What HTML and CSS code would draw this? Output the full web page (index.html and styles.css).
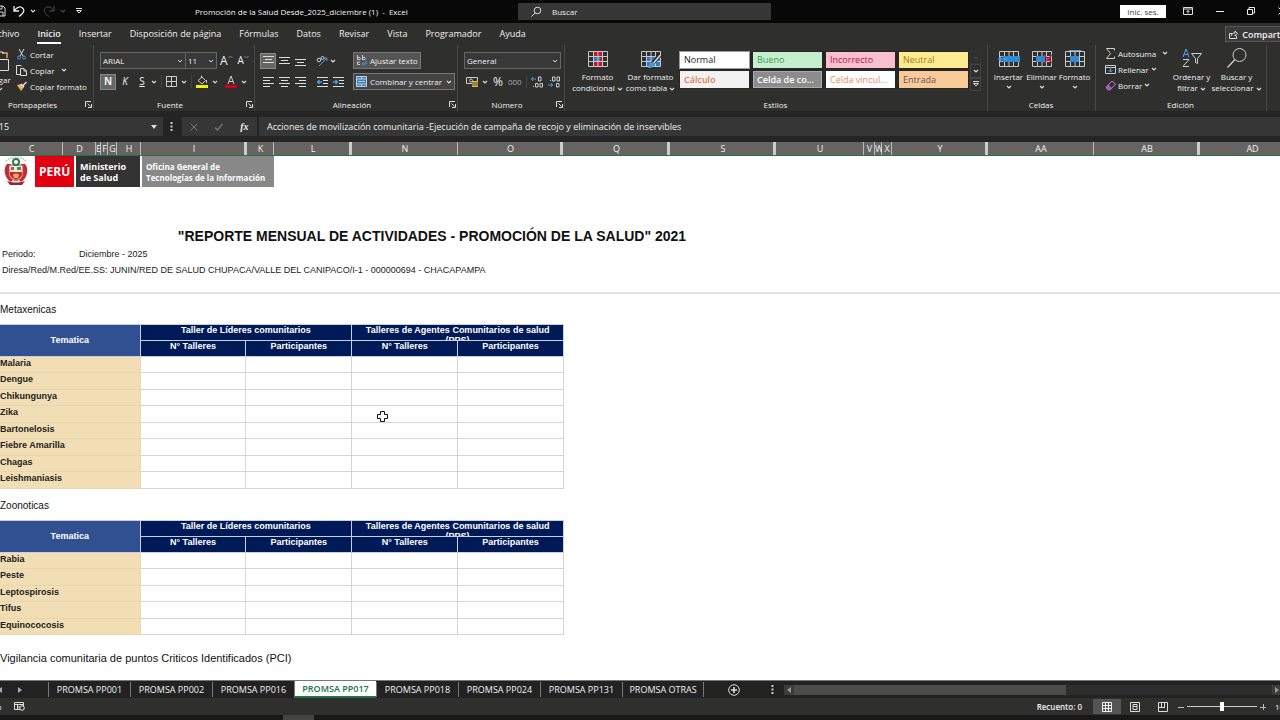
FILE: index.html
```html
<!DOCTYPE html>
<html lang="es">
<head>
    <meta charset="UTF-8">
    <meta name="viewport" content="width=device-width, initial-scale=1.0">
    <title>Promoción de la Salud Desde_2025_diciembre (1) - Excel</title>
    <link rel="stylesheet" href="styles.css">
</head>
<body>
    <!-- Shared icons -->
    <svg class="defs" width="0" height="0">
        <symbol id="caret" viewBox="0 0 6 4"><path d="M1 1l2 2 2-2" fill="none" stroke="#ddd" stroke-width="1.1"/></symbol>
        <symbol id="launcher" viewBox="0 0 7 7"><path d="M.5 6V.5H6M2.5 2.5l3 3M6.5 3v3.5H3" fill="none" stroke="#ddd"/></symbol>
        <symbol id="grid" viewBox="0 0 20 18"><path d="M.5 1.5h19v15H.5zM.5 6.5h19M.5 11.500h19M5.500 1.500v15M10 1.500v15M14.500 1.500v15" fill="none" stroke="#c8c8c8"/></symbol>
    </svg>

    <div class="window">
        <!-- Title bar -->
        <header class="titlebar">
            <div class="quick">
                <button aria-label="Guardar"><svg width="12" height="12" viewBox="0 0 12 12"><path d="M1 1h8l2 2v8H1zM3 1v3h5V1M3 11V7h6v4" fill="none" stroke="#ddd"/></svg></button>
                <button aria-label="Deshacer"><svg width="12" height="12" viewBox="0 0 12 12"><path d="M1 1v5h5M1.500 5.500C4 1.500 8 1 10 3.500s0 5-4 8" fill="none" stroke="#eee" stroke-width="1.300"/></svg></button>
                <svg width="6" height="4"><use href="#caret"/></svg>
                <button class="dim" aria-label="Rehacer"><svg width="12" height="12" viewBox="0 0 12 12"><path d="M11 1v5H6M10.500 5.500C8 1.500 4 1 2 3.500s0 5 4 8" fill="none" stroke="#eee"/></svg></button>
                <svg class="dim" width="6" height="4"><use href="#caret"/></svg>
                <button class="customize" aria-label="Personalizar"><svg width="6" height="6" viewBox="0 0 6 6"><path d="M0 .5h6" stroke="#ddd"/><path d="M.5 2.500h5L3 5z" fill="none" stroke="#ddd"/></svg></button>
            </div>
            <h1>Promoción de la Salud Desde_2025_diciembre (1)&nbsp; -&nbsp; Excel</h1>
            <label class="search">
                <svg width="11" height="11" viewBox="0 0 11 11"><circle cx="6.500" cy="4.500" r="3.300" fill="none" stroke="#ddd"/><path d="M4 7l-3.500 3.500" stroke="#ddd"/></svg>
                <input type="text" placeholder="Buscar" aria-label="Buscar">
            </label>
            <div class="controls">
                <button class="signin">Inic. ses.</button>
                <button aria-label="Opciones de la cinta"><svg width="10" height="8" viewBox="0 0 10 8"><path d="M.5.5h9v7h-9zM.5 2h9M5 6.500V3.500M3.500 5L5 3.500 6.500 5" fill="none" stroke="#ddd"/></svg></button>
                <button aria-label="Minimizar"><svg width="8" height="8" viewBox="0 0 8 8"><path d="M0 4.500h8" stroke="#eee"/></svg></button>
                <button aria-label="Restaurar"><svg width="8" height="8" viewBox="0 0 8 8"><path d="M.5 2.500h5v5h-5zM2 2V.5h5.500V6H6" fill="none" stroke="#eee"/></svg></button>
                <button aria-label="Cerrar"><svg width="8" height="8" viewBox="0 0 8 8"><path d="M.5.5l7 7M7.500.5l-7 7" stroke="#eee"/></svg></button>
            </div>
        </header>

        <nav class="menu">
            <a href="#">Archivo</a>
            <a href="#" class="active">Inicio</a>
            <a href="#">Insertar</a>
            <a href="#">Disposición de página</a>
            <a href="#">Fórmulas</a>
            <a href="#">Datos</a>
            <a href="#">Revisar</a>
            <a href="#">Vista</a>
            <a href="#">Programador</a>
            <a href="#">Ayuda</a>
            <button class="share"><svg width="9" height="9" viewBox="0 0 9 9"><path d="M3 3.500H.5v5h7V6M2.500 6c0-2 1-3 3.500-3V1l2.500 2.500L6 6V4.500" fill="none" stroke="#ddd"/></svg>Compartir</button>
        </nav>

        <!-- Ribbon -->
        <div class="ribbon">
            <section class="group clipboard">
                <div class="tools">
                    <button class="big paste"><svg width="20" height="22" viewBox="0 0 20 22"><path d="M8 3H2v16h6M12 3h5v5" fill="none" stroke="#e0a550" stroke-width="1.500"/><path d="M7 4V2h6v2M9.500 9.500h9v11h-9z" fill="none" stroke="#ddd"/></svg>Pegar<svg width="6" height="4"><use href="#caret"/></svg></button>
                    <div class="list">
                        <button><svg width="11" height="11" viewBox="0 0 11 11"><path d="M3 0l4 7M8 0L4 7" stroke="#ddd"/><circle cx="3" cy="8.500" r="1.500" fill="none" stroke="#4a9bdc"/><circle cx="8" cy="8.500" r="1.500" fill="none" stroke="#4a9bdc"/></svg>Cortar</button>
                        <button><svg width="11" height="11" viewBox="0 0 11 11"><path d="M4 9.500H.5v-9H5l1 1M4.500 3.500h3.500l2.500 2.500v4.500h-6zM8 3.500V6h2.500" fill="none" stroke="#ddd"/></svg>Copiar<svg class="gap" width="6" height="4"><use href="#caret"/></svg></button>
                        <button><svg width="11" height="11" viewBox="0 0 11 11"><path d="M1 4l4-1 3 3-3 4z" fill="#e8b060"/><path d="M5 3l3 3M7 4.500L10.500 1" stroke="#ddd" stroke-width="1.500"/></svg>Copiar formato</button>
                    </div>
                </div>
                <footer><span>Portapapeles</span><svg width="7" height="7"><use href="#launcher"/></svg></footer>
            </section>

            <section class="group font">
                <div class="tools rows">
                    <div class="row">
                        <div class="combos">
                            <select class="combo family" aria-label="Fuente"><option>ARIAL</option></select>
                            <select class="combo size" aria-label="Tamaño"><option>11</option></select>
                        </div>
                        <button class="grow" aria-label="Aumentar">A<svg width="5" height="4" viewBox="0 0 5 4"><path d="M.5 3l2-2 2 2" fill="none" stroke="#4a9bdc"/></svg></button>
                        <button class="shrink" aria-label="Disminuir">A<svg width="5" height="4" viewBox="0 0 5 4"><path d="M.5 1l2 2 2-2" fill="none" stroke="#4a9bdc"/></svg></button>
                    </div>
                    <div class="row">
                        <button class="toggle on"><b>N</b></button>
                        <button class="toggle"><i>K</i></button>
                        <button class="toggle"><u>S</u></button>
                        <svg width="6" height="4"><use href="#caret"/></svg>
                        <span class="sep"></span>
                        <button aria-label="Bordes"><svg width="11" height="11" viewBox="0 0 11 11"><path d="M.5.5h10v10H.5zM5.500.5v10M.5 5.500h10" fill="none" stroke="#ccc"/></svg></button>
                        <svg width="6" height="4"><use href="#caret"/></svg>
                        <span class="sep"></span>
                        <button aria-label="Relleno"><svg width="12" height="13" viewBox="0 0 12 13"><path d="M2 5.500L6 2l3.500 3.500L6 9zM5.500 3V.5M10.500 5v3" fill="none" stroke="#ccc"/><path d="M0 10h12v3H0z" fill="#f2f200"/></svg></button>
                        <svg width="6" height="4"><use href="#caret"/></svg>
                        <button aria-label="Color de fuente"><svg width="12" height="13" viewBox="0 0 12 13"><path d="M3 9l3-8 3 8M4 6.500h4" fill="none" stroke="#ccc"/><path d="M0 10h12v3H0z" fill="#d00018"/></svg></button>
                        <svg width="6" height="4"><use href="#caret"/></svg>
                    </div>
                </div>
                <footer><span>Fuente</span><svg width="7" height="7"><use href="#launcher"/></svg></footer>
            </section>

            <section class="group align">
                <div class="tools columns">
                    <div class="rows">
                        <div class="row">
                            <button class="toggle on" aria-label="Arriba"><svg width="11" height="10" viewBox="0 0 11 10"><path d="M0 .5h11M2 3.500h7M0 6.500h11" stroke="#ddd"/></svg></button>
                            <button class="toggle" aria-label="Medio"><svg width="11" height="10" viewBox="0 0 11 10"><path d="M0 1.500h11M2 4.500h7M0 7.500h11" stroke="#ddd"/></svg></button>
                            <button class="toggle" aria-label="Abajo"><svg width="11" height="10" viewBox="0 0 11 10"><path d="M0 3.500h11M2 6.500h7M0 9.500h11" stroke="#ddd"/></svg></button>
                            <button class="toggle orient" aria-label="Orientación"><svg width="12" height="11" viewBox="0 0 12 11"><path d="M3 11l8-8M8 3h3v3" fill="none" stroke="#4a9bdc"/><circle cx="3" cy="5" r="1.800" fill="none" stroke="#ccc"/><circle cx="6.500" cy="3" r="1.500" fill="none" stroke="#ccc"/></svg></button>
                            <svg width="6" height="4"><use href="#caret"/></svg>
                        </div>
                        <div class="row">
                            <button class="toggle" aria-label="Izquierda"><svg width="11" height="10" viewBox="0 0 11 10"><path d="M0 .5h11M0 3.500h7M0 6.500h11M0 9.500h7" stroke="#ddd"/></svg></button>
                            <button class="toggle" aria-label="Centro"><svg width="11" height="10" viewBox="0 0 11 10"><path d="M0 .5h11M2 3.500h7M0 6.500h11M2 9.500h7" stroke="#ddd"/></svg></button>
                            <button class="toggle" aria-label="Derecha"><svg width="11" height="10" viewBox="0 0 11 10"><path d="M0 .5h11M4 3.500h7M0 6.500h11M4 9.500h7" stroke="#ddd"/></svg></button>
                            <button class="toggle orient" aria-label="Menos sangría"><svg width="11" height="10" viewBox="0 0 11 10"><path d="M0 .5h11M6 3.500h5M6 6.500h5M0 9.500h11" stroke="#ddd"/><path d="M5 5H.5M2.500 3L.5 5l2 2" fill="none" stroke="#4a9bdc" stroke-width="1.500"/></svg></button>
                            <button class="toggle" aria-label="Más sangría"><svg width="11" height="10" viewBox="0 0 11 10"><path d="M0 .5h11M6 3.500h5M6 6.500h5M0 9.500h11" stroke="#ddd"/><path d="M0 5h4.500M2.500 3l2 2-2 2" fill="none" stroke="#4a9bdc" stroke-width="1.500"/></svg></button>
                        </div>
                    </div>
                    <div class="rows">
                        <div class="row"><button class="wide"><svg width="11" height="11" viewBox="0 0 11 11"><path d="M1.500 0v5M1.500 3.500c0-1.500 3-1.500 3 0s-3 1.500-3 0M6.500 0v5M6.500 3.500c0-1.500 3-1.500 3 0s-3 1.500-3 0M4 7H1.500v2.500H4" fill="none" stroke="#ccc"/><path d="M10 6v3H6M7.500 7.500L6 9l1.500 1.500" fill="none" stroke="#4a9bdc"/></svg>Ajustar texto</button></div>
                        <div class="row"><button class="wide merge"><svg width="11" height="11" viewBox="0 0 11 11"><path d="M0 0h11v11H0z" fill="#3c7fb8"/><path d="M.5.5h10v10H.5zM.5 3h10M.5 8h10M5.500 0v3M5.500 8v3M2 5.500h7" fill="none" stroke="#bcd0e0"/></svg>Combinar y centrar<svg class="end" width="6" height="4"><use href="#caret"/></svg></button></div>
                    </div>
                </div>
                <footer><span>Alineación</span><svg width="7" height="7"><use href="#launcher"/></svg></footer>
            </section>

            <section class="group number">
                <div class="tools rows">
                    <div class="row"><select class="combo format" aria-label="Formato de número"><option>General</option></select></div>
                    <div class="row">
                        <button aria-label="Moneda"><svg width="13" height="11" viewBox="0 0 13 11"><path d="M.5 1.500h11v6H.5z" fill="none" stroke="#ccc"/><circle cx="5" cy="4.500" r="1.500" fill="none" stroke="#ccc"/><path d="M6 5h6v6H6z" fill="#e0bc50"/><path d="M6 7h6M6 9h6" stroke="#5a4a20"/></svg></button>
                        <svg width="6" height="4"><use href="#caret"/></svg>
                        <button class="percent">%</button>
                        <button class="thousands">000</button>
                        <span class="sep"></span>
                        <button class="decimals" aria-label="Aumentar decimales"><svg width="12" height="12" viewBox="0 0 12 12"><path d="M5 3H.5M2 1L.5 3 2 5" fill="none" stroke="#4a9bdc"/><path d="M7.500 1h2.500v4H7.500zM4.500 7.500H7v3.500H4.500zM9 7.500h2.500v3.500H9zM2 10.500h1" fill="none" stroke="#ccc"/></svg></button>
                        <button class="decimals" aria-label="Disminuir decimales"><svg width="12" height="12" viewBox="0 0 12 12"><path d="M0 9h4.500M3 7l1.500 2L3 11" fill="none" stroke="#4a9bdc"/><path d="M4.500 1H7v4H4.500zM9 1h2.500v4H9zM8.500 7.500H11v3.500H8.500zM2 4.500h1" fill="none" stroke="#ccc"/></svg></button>
                    </div>
                </div>
                <footer><span>Número</span><svg width="7" height="7"><use href="#launcher"/></svg></footer>
            </section>

            <section class="group styles">
                <div class="tools">
                    <button class="big"><svg width="20" height="18" viewBox="0 0 20 18"><path d="M5 1h9v16H5z" fill="#c5162c"/><path d="M5 7h7v4H5z" fill="#2f7cc4"/><use href="#grid"/></svg><span>Formato<br>condicional <svg width="6" height="4"><use href="#caret"/></svg></span></button>
                    <button class="big"><svg width="20" height="18" viewBox="0 0 20 18"><path d="M5 6h14v10H5z" fill="#2f7cc4"/><use href="#grid" width="20" height="18"/><path d="M19 5l-8 9" stroke="#2b2b2b" stroke-width="4"/><path d="M19.500 5l-7 8" stroke="#ddd" stroke-width="1.500"/><path d="M12 12c-3 0-3 3-5 6 4 0 7-1 7-4z" fill="#4a9bdc"/></svg><span>Dar formato<br>como tabla <svg width="6" height="4"><use href="#caret"/></svg></span></button>
                    <div class="gallery">
                        <button class="normal">Normal</button>
                        <button class="good">Bueno</button>
                        <button class="bad">Incorrecto</button>
                        <button class="neutral">Neutral</button>
                        <button class="calc">Cálculo</button>
                        <button class="check">Celda de co...</button>
                        <button class="linked">Celda vincul...</button>
                        <button class="input">Entrada</button>
                    </div>
                    <div class="scroller">
                        <button class="dim" aria-label="Subir"><svg width="6" height="4" viewBox="0 0 6 4"><path d="M1 3l2-2 2 2" fill="none" stroke="#aaa"/></svg></button>
                        <button aria-label="Bajar"><svg width="6" height="4"><use href="#caret"/></svg></button>
                        <button aria-label="Más"><svg width="6" height="6" viewBox="0 0 6 6"><path d="M0 .5h6" stroke="#ddd"/><path d="M.5 2.500h5L3 5z" fill="none" stroke="#ddd"/></svg></button>
                    </div>
                </div>
                <footer><span>Estilos</span></footer>
            </section>

            <section class="group cells">
                <div class="tools">
                    <button class="big"><svg width="22" height="18" viewBox="0 0 22 18"><use href="#grid" x="1" width="20" height="18"/><path d="M5 6h17v6H5z" fill="#2f8ad8"/><path d="M9 9H1M4 6L1 9l3 3" fill="none" stroke="#4aa3ea" stroke-width="1.500"/></svg><span>Insertar</span><svg width="6" height="4"><use href="#caret"/></svg></button>
                    <button class="big"><svg width="22" height="18" viewBox="0 0 22 18"><use href="#grid" x="1" width="20" height="18"/><path d="M5 6h9v6H5z" fill="#2f8ad8"/><path d="M13 5l8 8M21 5l-8 8" stroke="#c8284a" stroke-width="1.500"/></svg><span>Eliminar</span><svg width="6" height="4"><use href="#caret"/></svg></button>
                    <button class="big"><svg width="22" height="18" viewBox="0 0 22 18"><use href="#grid" x="1" width="20" height="18"/><path d="M6 6h9v6H6z" fill="#2f8ad8"/><path d="M5 .5h12" stroke="#4aa3ea"/></svg><span>Formato</span><svg width="6" height="4"><use href="#caret"/></svg></button>
                </div>
                <footer><span>Celdas</span></footer>
            </section>

            <section class="group edit">
                <div class="tools">
                    <div class="list">
                        <button><svg width="11" height="11" viewBox="0 0 11 11"><path d="M9.500 2.500V.5h-8l4 5-4 5h8v-2" fill="none" stroke="#ccc"/></svg>Autosuma<svg class="gap" width="6" height="4"><use href="#caret"/></svg></button>
                        <button><svg width="11" height="11" viewBox="0 0 11 11"><path d="M.5 1.500h10v8H.5zM.5 3.500h10" fill="none" stroke="#ccc"/><path d="M5.500 3v5M3.500 6l2 2 2-2" fill="none" stroke="#4aa3ea"/></svg>Rellenar<svg width="6" height="4"><use href="#caret"/></svg></button>
                        <button><svg width="11" height="11" viewBox="0 0 11 11"><path d="M1 7l6-6 3.500 3L5 10H3z" fill="none" stroke="#c07ad0"/><path d="M1 7l2.500-2.500L7 8l-2 2H3z" fill="#a455b8"/></svg>Borrar<svg width="6" height="4"><use href="#caret"/></svg></button>
                    </div>
                    <button class="big"><svg width="20" height="20" viewBox="0 0 20 20"><path d="M1 9l3-8 3 8M2 6.500h4" fill="none" stroke="#4aa3ea"/><path d="M1 11.500h6l-6 7h6M9.500 5.500h10l-4 5v5l-2-1v-4z" fill="none" stroke="#ccc"/></svg><span>Ordenar y<br>filtrar <svg width="6" height="4"><use href="#caret"/></svg></span></button>
                    <button class="big"><svg width="20" height="20" viewBox="0 0 20 20"><circle cx="12.500" cy="7" r="6.500" fill="none" stroke="#ccc"/><path d="M8 11.500L.5 19.500" stroke="#ccc" stroke-width="1.300"/></svg><span>Buscar y<br>seleccionar <svg width="6" height="4"><use href="#caret"/></svg></span></button>
                </div>
                <footer><span>Edición</span></footer>
            </section>
        </div>

        <!-- Formula bar -->
        <div class="formula">
            <div class="namebox">
                <input type="text" value="N15" aria-label="Cuadro de nombres">
                <svg width="6" height="4" viewBox="0 0 6 4"><path d="M0 0h6L3 4z" fill="#ddd"/></svg>
            </div>
            <svg width="3" height="9" viewBox="0 0 3 9"><path d="M.5 0h2v2h-2zM.5 3.500h2v2h-2zM.5 7h2v2h-2z" fill="#ccc"/></svg>
            <div class="fx">
                <button aria-label="Cancelar"><svg width="8" height="8" viewBox="0 0 8 8"><path d="M.5.5l7 7M7.500.5l-7 7" stroke="#777"/></svg></button>
                <button aria-label="Introducir"><svg width="8" height="8" viewBox="0 0 8 8"><path d="M0 4.500L2.500 7l5-6" fill="none" stroke="#777" stroke-width="1.300"/></svg></button>
                <button class="fn">fx</button>
            </div>
            <input class="content" type="text" aria-label="Barra de fórmulas" value="Acciones de movilización comunitaria -Ejecución de campaña de recojo y eliminación de inservibles">
        </div>

        <!-- Worksheet -->
        <div class="colheads">
            <span>B</span><span>C</span><span>D</span><span>E</span><span>F</span><span>G</span><span>H</span><span class="thick">I</span><span>K</span><span class="thick">L</span><span>N</span><span class="thick">O</span><span class="thick">Q</span><span class="thick">S</span><span>U</span><span>V</span><span>W</span><span>X</span><span class="thick">Y</span><span>AA</span><span class="thick">AB</span><span>AD</span>
        </div>
        <main class="sheet">
            <div class="logo">
                <svg width="26" height="30" viewBox="0 0 26 30">
                    <path d="M3 5C8 0 18 0 23 5" fill="none" stroke="#bbb" stroke-width="1.500" stroke-dasharray="1.500 1"/>
                    <path d="M4 8c-4 4-3 14 4 18l3-3C7 20 6 14 8 8zM22 8c4 4 3 14-4 18l-3-3c4-3 5-9 3-15z" fill="#c62a35"/>
                    <path d="M6 9h14v9c0 4-4 6-7 7-3-1-7-3-7-7z" fill="#f3e4dc" stroke="#b8444a"/>
                    <path d="M7 16h12v3c-1 3-4 4-6 5-2-1-5-2-6-5z" fill="#cc2430"/>
                    <path d="M10 19c1-2 5-2 6 0l-1 3h-4z" fill="#e0b04a"/>
                    <path d="M8 11h3v3H8z" fill="#8d6b52"/>
                    <path d="M14 11h4v3h-4z" fill="#4b8a52"/>
                    <circle cx="13" cy="6" r="3" fill="none" stroke="#2f7a44" stroke-width="2"/>
                    <path d="M4 25c6 2 12 2 18 0l-3 4H7z" fill="#8f2a30"/>
                </svg>
                <strong class="peru">PERÚ</strong>
                <strong class="ministry">Ministerio<br>de Salud</strong>
                <strong class="office">Oficina General de<br>Tecnologías de la Información</strong>
            </div>
            <h2>"REPORTE MENSUAL DE ACTIVIDADES - PROMOCIÓN DE LA SALUD" 2021</h2>
            <p class="period"><span>Periodo:</span><span>Diciembre - 2025</span></p>
            <p>Diresa/Red/M.Red/EE.SS: JUNIN/RED DE SALUD CHUPACA/VALLE DEL CANIPACO/I-1 - 000000694 - CHACAPAMPA</p>
            <hr>
            <h3>Metaxenicas</h3>
            <table>
                <colgroup><col class="topic"><col><col><col><col></colgroup>
                <thead>
                    <tr><th rowspan="2" class="theme">Tematica</th><th colspan="2">Taller de Líderes comunitarios</th><th colspan="2"><div class="cut">Talleres de Agentes Comunitarios de salud (PPS)</div></th></tr>
                    <tr><th>N° Talleres</th><th>Participantes</th><th>N° Talleres</th><th>Participantes</th></tr>
                </thead>
                <tbody>
                    <tr><td>Malaria</td><td></td><td></td><td></td><td></td></tr>
                    <tr><td>Dengue</td><td></td><td></td><td></td><td></td></tr>
                    <tr><td>Chikungunya</td><td></td><td></td><td></td><td></td></tr>
                    <tr><td>Zika</td><td></td><td></td><td></td><td></td></tr>
                    <tr><td>Bartonelosis</td><td></td><td></td><td></td><td></td></tr>
                    <tr><td>Fiebre Amarilla</td><td></td><td></td><td></td><td></td></tr>
                    <tr><td>Chagas</td><td></td><td></td><td></td><td></td></tr>
                    <tr><td>Leishmaniasis</td><td></td><td></td><td></td><td></td></tr>
                </tbody>
            </table>
            <h3>Zoonoticas</h3>
            <table>
                <colgroup><col class="topic"><col><col><col><col></colgroup>
                <thead>
                    <tr><th rowspan="2" class="theme">Tematica</th><th colspan="2">Taller de Líderes comunitarios</th><th colspan="2"><div class="cut">Talleres de Agentes Comunitarios de salud (PPS)</div></th></tr>
                    <tr><th>N° Talleres</th><th>Participantes</th><th>N° Talleres</th><th>Participantes</th></tr>
                </thead>
                <tbody>
                    <tr><td>Rabia</td><td></td><td></td><td></td><td></td></tr>
                    <tr><td>Peste</td><td></td><td></td><td></td><td></td></tr>
                    <tr><td>Leptospirosis</td><td></td><td></td><td></td><td></td></tr>
                    <tr><td>Tifus</td><td></td><td></td><td></td><td></td></tr>
                    <tr><td>Equinococosis</td><td></td><td></td><td></td><td></td></tr>
                </tbody>
            </table>
            <h3 class="large">Vigilancia comunitaria de puntos Criticos Identificados (PCI)</h3>
            <svg class="cursor" width="11" height="11" viewBox="0 0 11 11"><path d="M3.500.5h4v3h3v4h-3v3h-4v-3h-3v-4h3z" fill="#fff" stroke="#111"/></svg>
        </main>

        <!-- Sheet tabs -->
        <div class="sheets">
            <div class="arrows">
                <button aria-label="Anterior"><svg width="4" height="6" viewBox="0 0 4 6"><path d="M4 0v6L0 3z" fill="#aaa"/></svg></button>
                <button aria-label="Siguiente"><svg width="4" height="6" viewBox="0 0 4 6"><path d="M0 0v6l4-3z" fill="#aaa"/></svg></button>
            </div>
            <nav class="tabs">
                <a href="#">PROMSA PP001</a><a href="#">PROMSA PP002</a><a href="#">PROMSA PP016</a><a href="#" class="active">PROMSA PP017</a><a href="#">PROMSA PP018</a><a href="#">PROMSA PP024</a><a href="#">PROMSA PP131</a><a href="#">PROMSA OTRAS</a>
            </nav>
            <button class="add" aria-label="Hoja nueva"><svg width="12" height="12" viewBox="0 0 12 12"><circle cx="6" cy="6" r="5.300" fill="none" stroke="#ddd"/><path d="M6 3v6M3 6h6" stroke="#ddd" stroke-width="1.600"/></svg></button>
            <svg width="3" height="9" viewBox="0 0 3 9"><path d="M.5 0h2v2h-2zM.5 3.500h2v2h-2zM.5 7h2v2h-2z" fill="#ccc"/></svg>
            <div class="scrollbar">
                <button aria-label="Izquierda"><svg width="4" height="6" viewBox="0 0 4 6"><path d="M4 0v6L0 3z" fill="#999"/></svg></button>
                <div class="track"><div class="thumb"></div></div>
                <button aria-label="Derecha"><svg width="4" height="6" viewBox="0 0 4 6"><path d="M0 0v6l4-3z" fill="#999"/></svg></button>
            </div>
        </div>

        <footer class="status">
            <span class="ready">Listo</span>
            <button aria-label="Grabar macro"><svg width="11" height="9" viewBox="0 0 11 9"><path d="M.5.5h9v7h-9zM0 2.500h10M3.500 2v6M3 5h3" fill="none" stroke="#ddd"/><circle cx="8" cy="6" r="2.300" fill="#333" stroke="#ddd"/></svg></button>
            <span class="count">Recuento: 0</span>
            <button class="view on" aria-label="Normal"><svg width="10" height="10" viewBox="0 0 10 10"><path d="M.5.5h9v9h-9zM3.500 0v10M6.500 0v10M0 3.500h10M0 6.500h10" fill="none" stroke="#eee"/></svg></button>
            <button class="view" aria-label="Diseño de página"><svg width="10" height="10" viewBox="0 0 10 10"><path d="M.5.5h9v9h-9zM3 2.500h4v5H3zM3 4.500h4" fill="none" stroke="#ddd"/></svg></button>
            <button class="view" aria-label="Saltos de página"><svg width="10" height="10" viewBox="0 0 10 10"><path d="M.5.5h9v9h-9zM3.500 0v5.500M6.500 0v5.500M0 5.500h7" fill="none" stroke="#ddd"/></svg></button>
            <div class="zoom">
                <button aria-label="Alejar"><svg width="6" height="6" viewBox="0 0 6 6"><path d="M0 3.500h6" stroke="#bbb"/></svg></button>
                <input type="range" min="0" max="100" value="50" aria-label="Zoom">
                <button aria-label="Acercar"><svg width="6" height="6" viewBox="0 0 6 6"><path d="M0 3.500h6M3.500 0v6" stroke="#bbb"/></svg></button>
                <span>100%</span>
            </div>
        </footer>
        <div class="taskbar"><span class="task"></span><time>20:47</time></div>
    </div>
</body>
</html>
```
FILE: styles.css
```css
* { box-sizing: border-box; }
body {
    margin: 0;
    overflow: hidden;
    background: #0a0a0a;
    color: #f0f0f0;
    font: 8px/11px "Open Sans", "Noto Sans", sans-serif;
}
button, input, select { margin: 0; padding: 0; border: 0; background: none; color: inherit; font: inherit; }
input { min-width: 0; }
a { color: inherit; text-decoration: none; }
h1, h2, h3, p { margin: 0; }
svg { flex: none; }
button { display: flex; align-items: center; justify-content: center; white-space: nowrap; flex: none; }
.defs { position: absolute; }
.dim { opacity: 0.3; }

/* the window runs 20px past both sides of the screen */
.window {
    display: flex;
    flex-direction: column;
    height: 100vh;
    margin: 0 -20px;
}

/* title bar */
.titlebar { display: flex; align-items: center; height: 23px; padding-bottom: 1px; background: #080808; }
.quick { display: flex; align-items: center; gap: 5px; width: 215px; padding-left: 12px; }
.quick button { margin-left: 2px; }
.quick .customize { margin-left: 5px; }
.titlebar h1 { width: 323px; font-size: 8px; font-weight: 500; }
.search { display: flex; align-items: center; gap: 10px; width: 253px; height: 17px; padding-left: 13px; background: #363636; }
.search input { flex: 1; }
.search input::placeholder { color: #eee; opacity: 1; }
.controls { display: flex; align-items: center; gap: 23px; margin-left: auto; padding-right: 14px; }
.signin { width: 46px; height: 13px; background: #fff; color: #444; margin-right: -6px; }

/* menu */
.menu { display: flex; align-items: center; gap: 18px; height: 22px; padding-left: 8px; background: #2f2f2e; font-size: 9px; }
.menu a { padding: 2px 0; border-bottom: 2px solid transparent; line-height: 13px; }
.menu .active { font-weight: 600; border-color: #fff; }
.share { gap: 4px; width: 66px; height: 16px; margin-left: auto; margin-right: 9px; background: #3b3b3b; border: 1px solid #555; font-weight: 600; }

/* ribbon */
.ribbon { display: flex; height: 66px; background: #2f2f2e; }
.group { display: flex; flex-direction: column; flex: none; border-right: 1px solid #484848; padding: 2px 0 1px; }
.group footer { display: flex; align-items: center; justify-content: center; height: 12px; padding-right: 1px; }
.group footer span { flex: 1; text-align: center; }
.tools { display: flex; height: 51px; }
.rows { display: flex; flex-direction: column; gap: 4px; }
.tools.rows, .columns > .rows { padding-top: 5px; }
.row { display: flex; align-items: center; height: 17px; }
.list { display: flex; flex-direction: column; align-items: flex-start; gap: 4px; }
.list button { gap: 4px; height: 12px; }
.list .gap { margin-left: 4px; }
.big { flex-direction: column; justify-content: flex-start; gap: 3px; }
.big span { display: block; text-align: center; }
.sep { width: 1px; height: 13px; background: #444; margin: 0 4px; flex: none; }
.clipboard { width: 114px; }
.clipboard .tools { padding-left: 10px; }
.clipboard .list { padding: 1px 0 0 6px; }
.clipboard .list button { gap: 3px; }
.paste { gap: 2px; width: 20px; padding-top: 3px; }
.font { width: 161px; }
.font .tools { padding-left: 6px; }
.combos { display: flex; }
.combo { appearance: none; height: 17px; padding: 0 2px; border: 1px solid #666; background: #383838 url("data:image/svg+xml,%3Csvg xmlns='http://www.w3.org/2000/svg' width='6' height='4'%3E%3Cpath d='M1 1l2 2 2-2' fill='none' stroke='%23ddd'/%3E%3C/svg%3E") no-repeat right 2px center; }
.family { width: 86px; }
.size { width: 31px; border-left: 0; }
.grow { font-size: 12px; margin-left: 3px; align-items: flex-start; }
.shrink { font-size: 10px; margin-left: 5px; align-items: flex-start; }
.toggle { width: 16px; height: 16px; font-size: 10px; }
.toggle.on { background: #666; box-shadow: inset 0 0 0 1px #888; }
.font .toggle + .toggle { margin-left: 1px; }
.font .row svg + button { margin-left: 7px; }
.font .row button + svg { margin-left: 4px; }
.font .row .toggle + svg { margin-left: 1px; }
.align { width: 203px; }
.columns { gap: 6px; padding-left: 5px; }
.orient { margin-left: 6px; }
.align .rows:first-child { width: 87px; }
.wide { gap: 3px; height: 17px; padding: 0 2px; background: #555; border: 1px solid #777; }
.align .merge { width: 102px; background: #444; }
.end { margin-left: auto; }
.number { width: 107px; }
.number .tools { padding-left: 6px; }
.format { width: 97px; }
.number .row:last-child { padding-left: 2px; }
.number .row svg { margin-right: 3px; }
.percent { font-size: 12px; margin-left: 2px; }
.thousands { margin-left: 5px; color: #aaa; }
.decimals { margin-right: 2px; }
.styles { width: 423px; }
.styles .tools { padding-left: 6px; }
.styles .big { width: 53px; padding-top: 3px; }
.gallery { display: grid; grid-template-columns: repeat(4, 1fr); gap: 3px 4px; width: 290px; height: 38px; margin: 4px 0 0 2px; padding: 1px; background: #262626; }
.gallery button { justify-content: flex-start; padding-left: 4px; font-size: 9px; }
.normal { background: #fff; color: #222; outline: 1px solid #999; }
.good { background: #c6efce; color: #3c9a50; }
.bad { background: #f9bfcf; color: #b01848; }
.neutral { background: #ffeb90; color: #a08018; }
.gallery .calc { background: #f2f2f2; color: #e07a48; font-weight: 600; }
.gallery .check { background: #8c8c8c; color: #fff; font-weight: 600; padding-left: 3px; border: 1px solid #aaa; }
.linked { background: #fff; color: #ee8a60; }
.input { background: #f8ca98; color: #6b5058; }
.scroller { display: flex; flex-direction: column; width: 11px; margin: 4px 0 0 1px; height: 40px; }
.scroller button { flex: 1; border: 1px solid #444; }
.cells { width: 108px; }
.cells .tools { padding-left: 4px; }
.cells .big { width: 33px; padding-top: 3px; }
.edit { width: 171px; }
.edit .tools { padding-left: 9px; }
.edit .list { width: 64px; }
.edit .list button { gap: 2px; }
.edit .big { width: 45px; padding-top: 1px; }

/* formula bar */
.formula { display: flex; align-items: center; height: 31px; background: #242424; font-size: 9px; }
.formula > div, .content { height: 19px; background: #363636; }
.namebox { display: flex; align-items: center; width: 183px; padding: 0 6px 0 12px; margin-right: 7px; }
.namebox input { flex: 1; }
.fx { display: flex; align-items: center; justify-content: space-around; width: 75px; margin: 0 2px 0 9px; }
.fn { font: italic bold 10px "Liberation Serif", serif; }
.formula .content { flex: 1; padding-left: 8px; }

/* column headings */
.colheads {
    display: grid;
    grid-template-columns: 20px 63px 33px 5px 7px 9px 24px 106px 27px 78px 106px 105px 107px 106px 88px 11px 7px 10px 96px 106px 106px 105px;
    height: 14px;
    overflow: hidden;
    background: #676363;
    border-bottom: 1px solid #1f7244;
    font-size: 9px;
    line-height: 14px;
    text-align: center;
}
.colheads span { box-shadow: inset -1px 0 #bbb; overflow: hidden; }
.colheads .thick { box-shadow: inset -3px 0 #ccc; }

/* worksheet */
.sheet {
    position: relative;
    flex: 1;
    min-height: 0;
    overflow: hidden;
    padding-left: 20px;
    background: #fff;
    color: #222;
    font: 9px/16px "Liberation Sans", Arial, sans-serif;
}
.logo { display: flex; gap: 2px; height: 31px; padding-left: 3px; color: #fff; font: 9px/11px "Open Sans", sans-serif; }
.logo svg { margin-right: 4px; }
.logo strong { display: flex; align-items: center; padding: 0 4px; }
.logo .peru { width: 39px; background: #e00010; font-size: 12px; }
.logo .ministry { width: 64px; background: #333; }
.logo .office { width: 132px; background: #888; font-size: 8px; }
.sheet h2 { width: 864px; margin-top: 40px; font-size: 14px; line-height: 18px; text-align: center; color: #111; }
.sheet p { padding-left: 2px; }
.period { display: grid; grid-template-columns: 77px 1fr; margin-top: 1px; }
.sheet hr { margin: 14px 0 8px; border: 0; border-top: 2px solid #e4e4e4; }
.sheet h3 { font-size: 10px; font-weight: 400; line-height: 16px; color: #111; }
.sheet .large { margin-top: 15px; font-size: 11px; }
table { width: 564px; table-layout: fixed; border-collapse: collapse; margin: 6px 0 9px; }
.topic { width: 140px; }
th, td { height: 16px; padding: 0; border: 1px solid #d4d4d4; line-height: 12px; vertical-align: top; }
th { background: #001a57; color: #fff; border-color: #c8cfe0; line-height: 11px; }
.theme { background: #305092; vertical-align: middle; }
th:first-child, td:first-child { border-left: 0; }
thead tr + tr th:first-child { border-left: 1px solid #c8cfe0; }
tbody tr:nth-child(even) td { height: 17px; }
td:first-child { background: #f2deb4; border-color: #e8d6b0; color: #222; font-weight: 700; }
.cut { height: 15px; padding: 0 8px; overflow: hidden; line-height: 10px; }
.cursor { position: absolute; left: 397px; top: 255px; }

/* sheet tabs */
.sheets { display: flex; align-items: center; height: 18px; background: #222; border-top: 1px solid #777; font-size: 9px; }
.arrows { display: flex; gap: 16px; width: 68px; padding-left: 18px; }
.tabs { display: flex; align-self: stretch; align-items: center; }
.tabs a { width: 82px; text-align: center; line-height: 15px; border-left: 1px solid #777; white-space: nowrap; }
.tabs a:last-child { border-right: 1px solid #777; }
.tabs .active { align-self: stretch; background: #fff; color: #217346; font-weight: 600; border-bottom: 2px solid #217346; }
.add { margin: 0 31px 0 24px; }
.scrollbar { display: flex; flex: 1; height: 10px; margin: 0 18px 0 10px; background: #2d2d2d; }
.scrollbar button { width: 10px; background: #3c3c3c; }
.track { flex: 1; }
.thumb { width: 57%; height: 10px; background: #4c4c4c; }

/* status bar */
.status { display: flex; align-items: center; height: 17px; background: #2f2f2e; }
.ready { width: 34px; padding-left: 4px; }
.count { margin-left: auto; margin-right: 11px; font-weight: 600; }
.view { width: 28px; height: 15px; }
.view.on { background: #555; }
.zoom { display: flex; align-items: center; gap: 3px; width: 123px; padding-left: 1px; }
.zoom input { appearance: none; width: 70px; height: 10px; background: linear-gradient(#ccc, #ccc) center / 100% 1px no-repeat; }
.zoom input::-webkit-slider-thumb { appearance: none; width: 4px; height: 9px; background: #fff; }
.zoom span { margin-left: 6px; }

/* taskbar */
.taskbar { display: flex; height: 5px; overflow: hidden; background: #181818; }
.task { width: 31px; margin-left: 303px; background: #444; }
.taskbar time { margin: 1px 50px 0 auto; }
```
